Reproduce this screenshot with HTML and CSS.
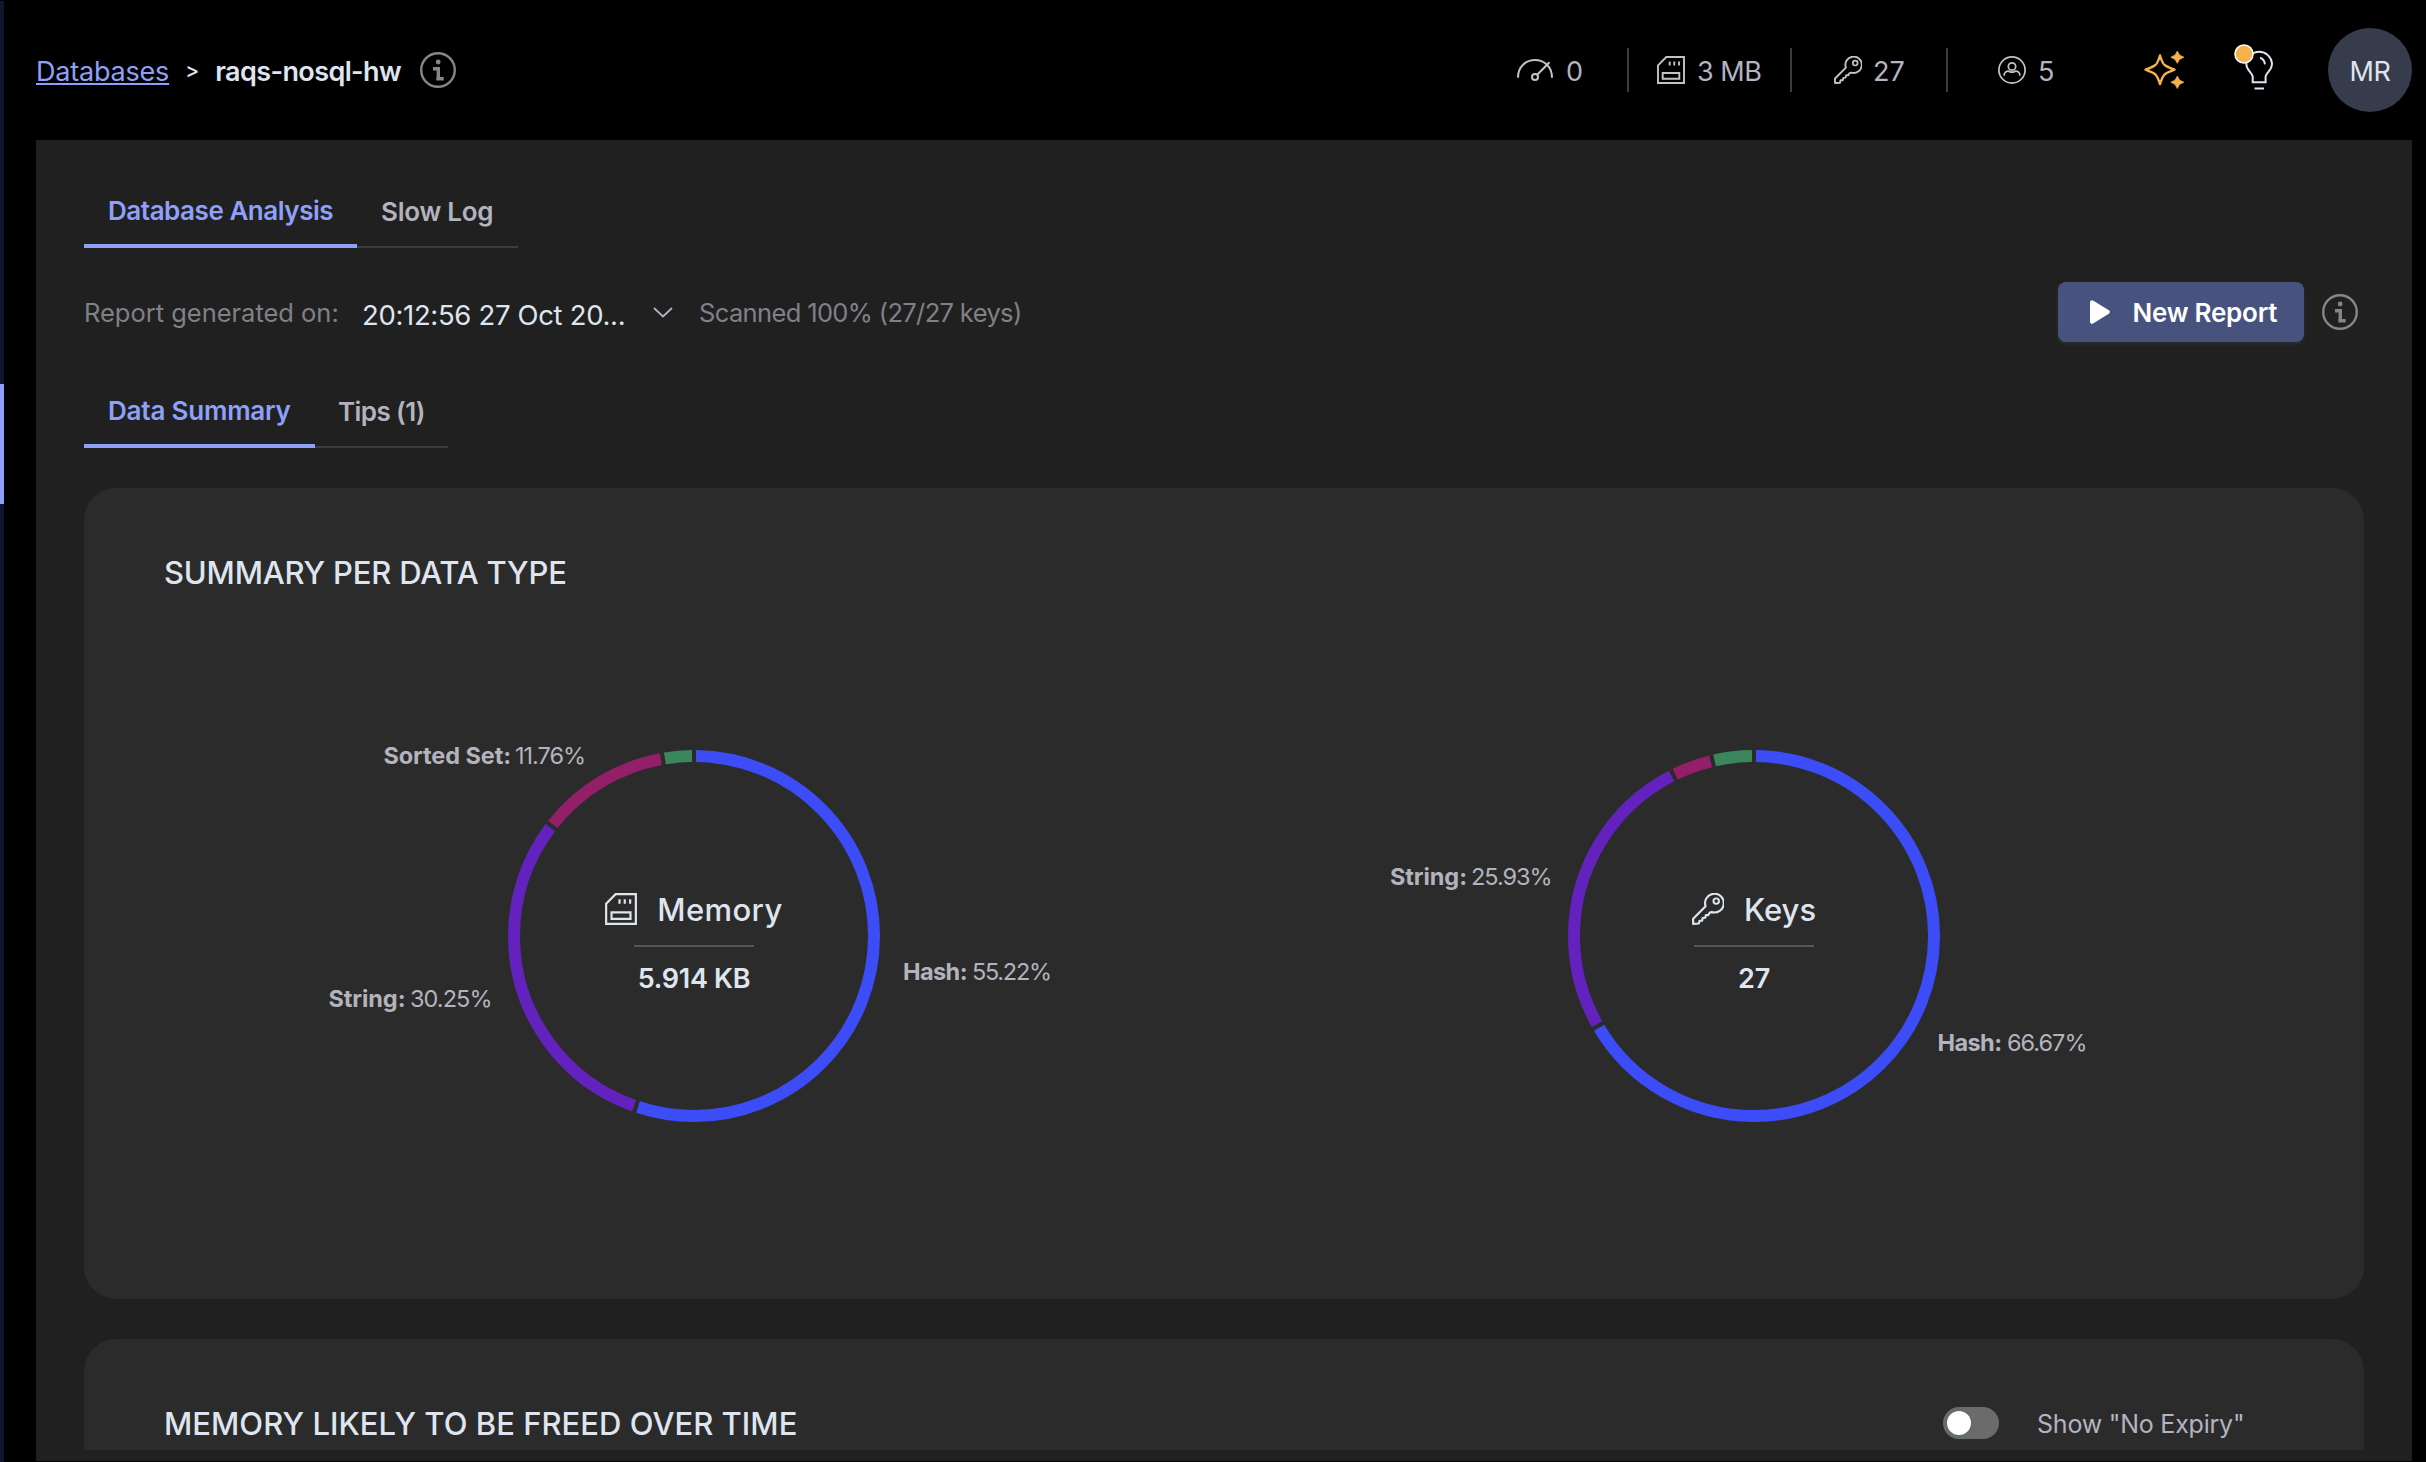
FILE: index.html
```html
<!DOCTYPE html>
<html lang="en">
<head>
<meta charset="utf-8">
<title>Database Analysis</title>
<link rel="stylesheet" href="styles.css">
</head>
<body>
<svg class="defs" aria-hidden="true">
  <symbol id="i-info" viewBox="0 0 36 36"><circle cx="18" cy="18" r="16.8" fill="none" stroke="currentColor" stroke-width="2.4"/><circle cx="18.2" cy="10" r="2.4" fill="currentColor"/><path d="M13 16.7H18.3V26.8M16.3 26.8H23.7" fill="none" stroke="currentColor" stroke-width="3.4"/></symbol>
  <symbol id="i-memory" viewBox="0 0 28 28"><path d="M9.3 1H27V27H1V9.3ZM12.7 5.5V9.5M17.3 5.5V9.5M22 5.5V9.5M5.7 17H22.3V22.7H5.7Z" fill="none" stroke="currentColor" stroke-width="1.9"/></symbol>
  <symbol id="i-key" viewBox="0 0 28 28"><path d="M11.9 11.6A8.2 8.2 0 1 1 17.3 16.7L15.6 17.1L14.3 19.3L12.2 19.3L11.6 21.6L9.3 21.9L8.9 24.2L6.6 24.3L6 26.7L1 27V22.5Z" fill="none" stroke="currentColor" stroke-width="1.9" stroke-linejoin="round"/><circle cx="21.2" cy="7.1" r="2.4" fill="none" stroke="currentColor" stroke-width="1.7"/></symbol>
</svg>
<div class="app">
  <nav class="rail"><span class="rail-active"></span></nav>
  <div class="main">
    <header class="header">
      <a class="crumb-link">Databases</a>
      <span class="crumb-sep">&gt;</span>
      <span class="crumb-name">raqs-nosql-hw</span>
      <svg class="info"><use href="#i-info"/></svg>
      <div class="stats">
        <div class="stat stat-ops">
          <svg class="ico-gauge" viewBox="0 0 36 36" fill="none" stroke="currentColor" stroke-width="2"><path d="M1 26.5C1 3 35 3 35 26.5" transform="translate(0 -.8)"/><circle cx="18" cy="25" r="3"/><path d="M20.2 22.8L32.5 10.3"/></svg>
          <span>0</span>
        </div>
        <div class="stat stat-memory"><svg class="ico"><use href="#i-memory"/></svg><span>3 MB</span></div>
        <div class="stat stat-keys"><svg class="ico"><use href="#i-key"/></svg><span>27</span></div>
        <div class="stat stat-clients">
          <svg class="ico" viewBox="0 0 28 28" fill="none" stroke="currentColor" stroke-width="1.7"><circle cx="14" cy="14" r="13.1"/><circle cx="14" cy="10.5" r="3.7"/><path d="M6 19.8C6 15.5 9.5 14.6 11.3 15.4Q14 17 16.7 15.4C18.5 14.6 22 15.5 22 19.8"/></svg>
          <span>5</span>
        </div>
      </div>
      <svg class="ico-spark" viewBox="0 0 40 38"><path d="M16 4.5C18 11 19.5 13.5 21 14.3C22.5 15.5 26 17 30.5 18.7C26 20.5 22.5 22 21 23.2C19.5 24.5 18 27 16 33C14 27 12.5 24.5 11 23.2C9.5 22 6 20.5 1.5 18.7C6 17 9.5 15.5 11 14.3C12.5 13.5 14 11 16 4.5Z" fill="none" stroke="currentColor" stroke-width="2.4" stroke-linejoin="round"/><path d="M33.3 0L35.6 4L40 6.2L35.6 8.4L33.3 12.4L31 8.4L26.8 6.2L31 4ZM33.3 25L35.6 29L40 31.2L35.6 33.4L33.3 37.6L31 33.4L26.8 31.2L31 29Z" fill="currentColor" stroke="currentColor" stroke-width=".6" stroke-linejoin="round"/></svg>
      <svg class="ico-bulb" viewBox="0 0 40 46"><path d="M18.7 38.3V32.5C18 28.5 12.3 26.5 12.3 19.5A12.9 12.9 0 0 1 38 19.5C38 26.5 32.3 28.5 31.6 32.5V38.3ZM26 13.8Q30.2 15 31 20.3M20.5 44.5H30" fill="none" stroke="#dfe5ef" stroke-width="2"/><circle cx="10" cy="10" r="9" fill="#f5b14c" stroke="#fff" stroke-width="1.6"/></svg>
      <div class="avatar">MR</div>
    </header>

    <main class="panel">
      <div class="tabs tabs-page">
        <div class="tab active">Database Analysis</div>
        <div class="tab tab-slow">Slow Log</div>
      </div>

      <div class="report">
        <span class="report-label">Report generated on:</span>
        <span class="report-date">20:12:56 27 Oct 20...</span>
        <svg class="chevron" viewBox="0 0 20 11"><path d="M1 1L10 9.5L19 1" fill="none" stroke="currentColor" stroke-width="1.8"/></svg>
        <span class="report-scan">Scanned 100% (27/27 keys)</span>
        <button class="new-report">
          <svg viewBox="0 0 20 24"><path d="M2 2.2L17.8 12L2 21.8Z" fill="#fff" stroke="#fff" stroke-width="4" stroke-linejoin="round"/></svg>
          New Report
        </button>
        <svg class="info info-report"><use href="#i-info"/></svg>
      </div>

      <div class="tabs tabs-data">
        <div class="tab active">Data Summary</div>
        <div class="tab tab-tips">Tips (1)</div>
      </div>

      <section class="card summary">
        <h2 class="title title-summary">SUMMARY PER DATA TYPE</h2>
        <div class="charts">
          <div class="chart">
            <svg class="donut" viewBox="0 0 1060 560">
              <g class="ring" transform="rotate(-90 530 280)">
                <circle class="hash" cx="530" cy="280" r="180" pathLength="10000" stroke-dasharray="5486 10000" stroke-dashoffset="-18"/>
                <circle class="string" cx="530" cy="280" r="180" pathLength="10000" stroke-dasharray="2989 10000" stroke-dashoffset="-5540"/>
                <circle class="zset" cx="530" cy="280" r="180" pathLength="10000" stroke-dasharray="1140 10000" stroke-dashoffset="-8565"/>
                <circle class="other" cx="530" cy="280" r="180" pathLength="10000" stroke-dasharray="241 10000" stroke-dashoffset="-9741"/>
              </g>
              <g class="labels">
                <text class="b" x="219.5" y="107.7" textLength="127.5">Sorted Set:</text><text x="351" y="107.7" textLength="71">11.76%</text>
                <text class="b" x="164.5" y="350.7" textLength="77">String:</text><text x="246" y="350.7" textLength="82.5">30.25%</text>
                <text class="b" x="739" y="323.7" textLength="64.5">Hash:</text><text x="808" y="323.7" textLength="80">55.22%</text>
              </g>
            </svg>
            <div class="center">
              <div class="center-name"><svg><use href="#i-memory"/></svg><span class="name-memory">Memory</span></div>
              <div class="center-line"></div>
              <div class="center-value">5.914 KB</div>
            </div>
          </div>
          <div class="chart">
            <svg class="donut" viewBox="0 0 1060 560">
              <g class="ring" transform="rotate(-90 530 280)">
                <circle class="hash" cx="530" cy="280" r="180" pathLength="10000" stroke-dasharray="6631 10000" stroke-dashoffset="-18"/>
                <circle class="string" cx="530" cy="280" r="180" pathLength="10000" stroke-dasharray="2557 10000" stroke-dashoffset="-6685"/>
                <circle class="zset" cx="530" cy="280" r="180" pathLength="10000" stroke-dasharray="334 10000" stroke-dashoffset="-9278"/>
                <circle class="other" cx="530" cy="280" r="180" pathLength="10000" stroke-dasharray="334 10000" stroke-dashoffset="-9648"/>
              </g>
              <g class="labels">
                <text class="b" x="166" y="228.7" textLength="77">String:</text><text x="247" y="228.7" textLength="81.5">25.93%</text>
                <text class="b" x="713.5" y="395" textLength="64.5">Hash:</text><text x="783" y="395" textLength="80.5">66.67%</text>
              </g>
            </svg>
            <div class="center">
              <div class="center-name"><svg><use href="#i-key"/></svg><span>Keys</span></div>
              <div class="center-line"></div>
              <div class="center-value">27</div>
            </div>
          </div>
        </div>
      </section>

      <section class="card freed">
        <h2 class="title title-freed">MEMORY LIKELY TO BE FREED OVER TIME</h2>
        <div class="switch-row">
          <span class="switch"><span class="knob"></span></span>
          <span class="switch-label">Show "No Expiry"</span>
        </div>
      </section>
    </main>
  </div>
</div>
</body>
</html>
```
FILE: styles.css
```css
* { box-sizing: border-box; }
body { margin: 0; background: #000; color: #dfe5ef; font-family: Inter, "Liberation Sans", sans-serif; }
svg { display: block; flex: none; }
.defs { position: absolute; width: 0; height: 0; }
.app { display: flex; width: 2426px; height: 1462px; overflow: hidden; }
.rail { width: 4px; padding-top: 383px; margin-top: 1px; background: #11152f; }
.rail-active { display: block; width: 4px; height: 120px; background: #8fa0fb; }
.main { width: 2422px; }

.header { display: flex; align-items: center; height: 140px; padding: 3px 14px 0 32px; font-size: 27px; line-height: 36px; white-space: nowrap; }
.crumb-link { color: #8fa0fb; letter-spacing: -.2px; text-decoration: underline; text-decoration-thickness: 2px; text-underline-offset: 2px; text-decoration-skip-ink: none; }
.crumb-sep { width: 30px; margin-left: 16px; margin-top: -1px; font-size: 21px; font-weight: 500; }
.crumb-name { width: 205px; font-weight: 560; letter-spacing: -.6px; }
.info { width: 36px; height: 36px; color: #85858c; }
.header svg { margin-top: -3px; }
.stats { display: flex; align-items: center; margin-left: auto; color: #b3b3c2; }
.stat { display: flex; align-items: center; height: 44px; margin-top: -3px; border-right: 2px solid #3c3c3c; }
.stat span { padding-top: 3px; }
.header .stat svg { margin: 0; color: #c3c3c3; }
.ico { width: 28px; height: 28px; }
.ico-gauge { width: 36px; height: 36px; }
.stat-ops { width: 112px; gap: 13px; }
.stat-memory { width: 163px; padding-left: 28px; gap: 12px; letter-spacing: -.5px; }
.stat-keys { width: 156px; padding-left: 42px; gap: 11px; }
.stat-clients { width: 196px; padding-left: 50px; gap: 12px; border-right: 0; }
.ico-spark { width: 40px; height: 38px; color: #f5b14c; }
.ico-bulb { width: 40px; height: 46px; margin-left: 50px; position: relative; top: -3px; }
.avatar { width: 84px; height: 84px; margin: -3px 0 0 54px; padding-top: 2px; border-radius: 50%; background: #363c4b; line-height: 84px; text-align: center; letter-spacing: -.4px; }

.panel { height: 1321px; margin: 0 14px 0 32px; padding: 44px 48px 0; background: #202020; overflow: hidden; }
.tabs { display: flex; align-items: stretch; height: 64px; font-size: 26px; font-weight: 560; white-space: nowrap; }
.tab { padding-left: 24px; line-height: 55px; color: #b3b3bd; border-bottom: 2px solid #3d3d3d; }
.tab.active { line-height: 53px; color: #8fa0fb; border-bottom: 4px solid #8fa0fb; }
.tabs-page .active { width: 273px; letter-spacing: -.46px; }
.tab-slow { width: 161px; letter-spacing: -.25px; }
.tabs-data { margin-top: 42px; }
.tabs-data .active { width: 231px; letter-spacing: -.2px; }
.tab-tips { width: 133px; padding-left: 23px; letter-spacing: -.6px; }

.report { display: flex; align-items: center; height: 60px; margin-top: 34px; font-size: 25.5px; color: #808087; white-space: nowrap; }
.report-label { width: 278px; padding-top: 1px; letter-spacing: -.02px; }
.report-date { width: 291px; padding-top: 6px; font-size: 27.5px; letter-spacing: -.33px; color: #dfe5ef; }
.chevron { width: 20px; height: 11px; color: #b3b3bd; }
.report-scan { margin-left: 26px; padding-top: 1px; letter-spacing: -.64px; }
.new-report { display: flex; align-items: center; width: 246px; height: 60px; margin-left: auto; padding: 0 0 0 32px; border: 0; border-radius: 8px; background: #47527e; box-shadow: 0 2px 4px rgba(60, 80, 80, .35); color: #fff; font: 600 26px Inter, sans-serif; letter-spacing: -.25px; gap: 22.5px; }
.new-report svg { width: 20px; height: 24px; }
.info-report { margin: 0 6px 0 18px; }

.card { margin-top: 40px; padding: 65px 80px 0; border-radius: 32px; background: #2b2b2b; }
.summary { height: 811px; }
.title { margin: 0; font-size: 31px; line-height: 39px; font-weight: 530; white-space: nowrap; }
.title-summary { letter-spacing: -.2px; }
.title-freed { letter-spacing: .03px; }
.charts { display: grid; grid-template-columns: 1fr 1fr; margin-top: 64px; }
.chart { display: grid; }
.donut, .center { grid-area: 1 / 1; }
.donut { width: 1060px; height: 560px; }
.ring circle { fill: none; stroke-width: 12px; }
.ring .hash { stroke: #3c4df7; }
.ring .string { stroke: #6322be; }
.ring .zset { stroke: #931f68; }
.ring .other { stroke: #3b865d; }
.labels { font-size: 23.5px; fill: #b3b3bd; }
.labels .b { font-weight: 650; }
.center { display: flex; flex-direction: column; align-items: center; padding-top: 233px; }
.center-name { display: flex; align-items: center; gap: 20px; height: 40px; font-size: 31px; font-weight: 540; }
.center-name svg { width: 32px; height: 32px; }
.name-memory { letter-spacing: .4px; }
.center-line { width: 120px; height: 2px; margin: 16px 0 14px; background: #565656; }
.center-value { font-size: 27px; line-height: 36px; font-weight: 600; letter-spacing: -.3px; }

.freed { display: flex; justify-content: space-between; height: 111px; border-radius: 32px 32px 0 0; }
.switch-row { display: flex; align-items: center; height: 39px; margin-right: 38px; }
.switch { width: 56px; height: 32px; margin-top: -2px; padding: 4px; border-radius: 16px; background: #6b6b6b; }
.knob { display: block; width: 24px; height: 24px; border-radius: 50%; background: #fff; box-shadow: 0 2px 4px rgba(90, 110, 115, .8); }
.switch-label { width: 209px; margin-left: 38px; font-size: 25px; letter-spacing: -.22px; color: #b3b3c2; white-space: nowrap; }
```
